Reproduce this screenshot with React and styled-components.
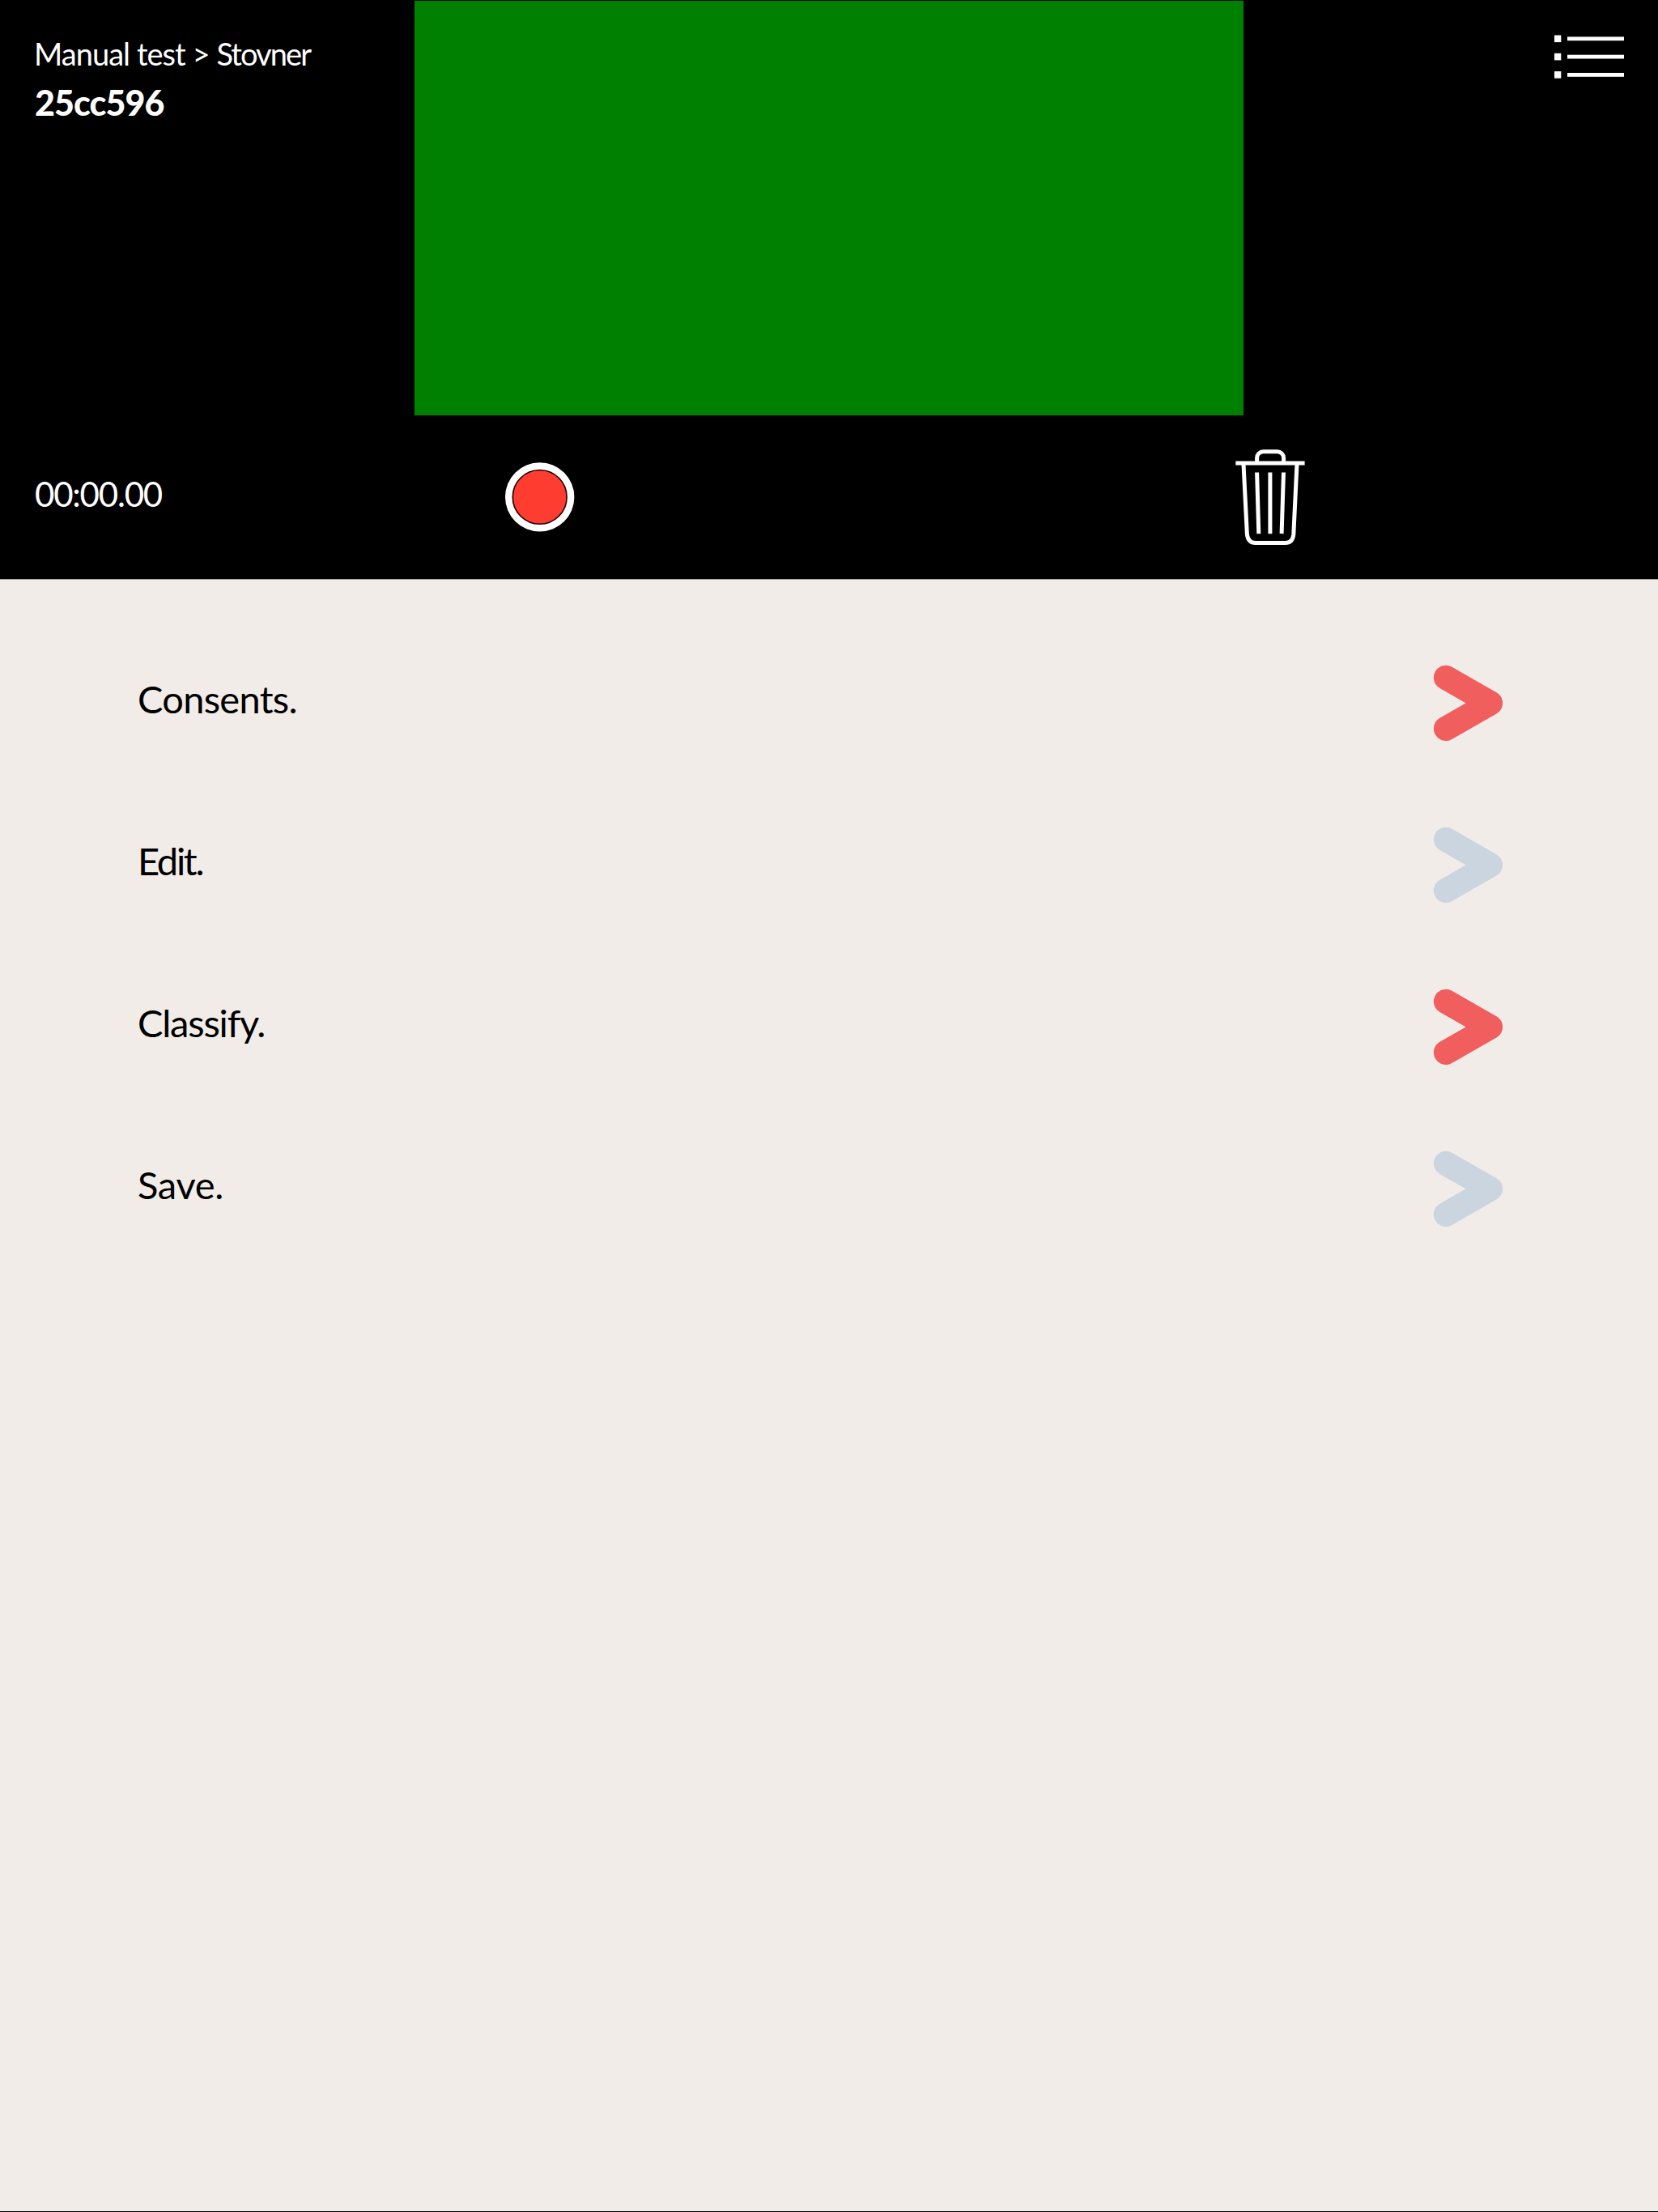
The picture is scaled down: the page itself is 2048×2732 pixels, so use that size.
import React from "react";
import styled, { createGlobalStyle } from "styled-components";

const GlobalStyle = createGlobalStyle`
  * { box-sizing: border-box; }
  body { margin: 0; background: #f1ece8; font-family: Lato, "Open Sans", sans-serif; }
`;

const Screen = styled.div`
  display: flex;
  flex-direction: column;
  height: 2732px;
  width: 2048px;
  background: #f1ece8;
  border-top: 1px solid #000;
  border-bottom: 1px solid #000;
`;

const Recorder = styled.header`
  background: #000;
  color: #fff;
  height: 715px;
  border-bottom: 1px solid #a09c9b;
`;

const Stage = styled.div`
  display: grid;
  grid-template-columns: 512px 1024px 512px;
  height: 512px;
`;

const Heading = styled.div`
  display: flex;
  flex-direction: column;
  gap: 7px;
  padding: 41px 0 0 42px;
  white-space: nowrap;
`;

const Breadcrumb = styled.div`
  font-size: 38px;
  line-height: 48px;
`;

const Crumb = styled.span`
  letter-spacing: ${(p) => p.$tracking}px;
`;

const Title = styled.div`
  font-size: 43px;
  line-height: 60px;
  font-weight: 900;
  letter-spacing: -0.9px;
  padding-left: 1px;
`;

const Preview = styled.div`
  background: #008000;
`;

const MenuArea = styled.div`
  display: flex;
  justify-content: flex-end;
  align-items: flex-start;
  padding: 42px 42px 0 0;
`;

const IconButton = styled.button`
  display: block;
  padding: 0;
  border: 0;
  background: none;
  line-height: 0;
  svg { display: block; }
`;

const Controls = styled.div`
  display: grid;
  grid-template-columns: 582px 902px 90px;
  align-items: center;
  height: 202px;
  padding-left: 42px;
`;

const Timer = styled.div`
  font-size: 42px;
  line-height: 50px;
  letter-spacing: -1.2px;
  padding: 0 0 9px 1px;
`;

const Steps = styled.nav`
  display: flex;
  flex-direction: column;
  padding: 52px 192px 0 170px;
`;

const Step = styled.div`
  display: flex;
  justify-content: space-between;
  align-items: center;
  height: 200px;
`;

const StepLabel = styled.span`
  color: #000;
  font-size: 47px;
  line-height: 60px;
  letter-spacing: ${(p) => p.$tracking}px;
  padding-bottom: 10px;
`;

const steps = [
  { label: "Consents.", color: "#f15e5e", tracking: -0.7 },
  { label: "Edit.", color: "#cbd5df", tracking: -2.3 },
  { label: "Classify.", color: "#f15e5e", tracking: -1.2 },
  { label: "Save.", color: "#cbd5df", tracking: -0.3 },
];

const MenuIcon = () => (
  <svg width="86" height="56" viewBox="0 0 86 56" fill="#fff">
    {[0.5, 22.8, 45.1].map((y) => (
      <React.Fragment key={y}>
        <rect x="0" y={y} width="8.3" height="8.6" />
        <rect x="16" y={y + 1.9} width="70" height="4.8" />
      </React.Fragment>
    ))}
  </svg>
);

const RecordIcon = () => (
  <svg width="86" height="86" viewBox="0 0 86 86">
    <circle cx="42.7" cy="42.9" r="42.7" fill="#fff" />
    <circle cx="42.7" cy="42.9" r="33.4" fill="#fe3c30" stroke="#1c0000" strokeWidth="1.6" />
  </svg>
);

const TrashIcon = () => (
  <svg width="86" height="120" viewBox="26.4 13.8 86 120" fill="none" stroke="#fff" strokeWidth="5">
    <path d="M26.7 31.8H112" />
    <path d="M53 31V25.5a8 8 0 0 1 8-8h17a8 8 0 0 1 8 8V31" />
    <path d="M36.4 33L40.8 120Q42.2 130.3 51 130.3H88Q97 130.3 98.2 120L102.4 33" />
    <path d="M53 43.3L55.2 119M69.3 43.3V119M85.9 43.3L83.5 119" />
  </svg>
);

const Chevron = ({ color }) => (
  <svg width="86" height="94" viewBox="0 0 86 94">
    <path
      d="M16 15.9L71 47.4L16 78.9"
      fill="none"
      stroke={color}
      strokeWidth="30.2"
      strokeLinecap="round"
      strokeLinejoin="round"
    />
  </svg>
);

export default function App() {
  return (
    <>
      <GlobalStyle />
      <Screen>
        <Recorder>
          <Stage>
            <Heading>
              <Breadcrumb>
                <Crumb $tracking={-0.95}>Manual test &gt; </Crumb>
                <Crumb $tracking={-1.9}>Stovner</Crumb>
              </Breadcrumb>
              <Title>25cc596</Title>
            </Heading>
            <Preview />
            <MenuArea>
              <IconButton aria-label="Menu">
                <MenuIcon />
              </IconButton>
            </MenuArea>
          </Stage>
          <Controls>
            <Timer>00:00.00</Timer>
            <IconButton aria-label="Record">
              <RecordIcon />
            </IconButton>
            <IconButton aria-label="Delete">
              <TrashIcon />
            </IconButton>
          </Controls>
        </Recorder>
        <Steps>
          {steps.map((s) => (
            <Step key={s.label}>
              <StepLabel $tracking={s.tracking}>{s.label}</StepLabel>
              <IconButton aria-label={s.label}>
                <Chevron color={s.color} />
              </IconButton>
            </Step>
          ))}
        </Steps>
      </Screen>
    </>
  );
}
